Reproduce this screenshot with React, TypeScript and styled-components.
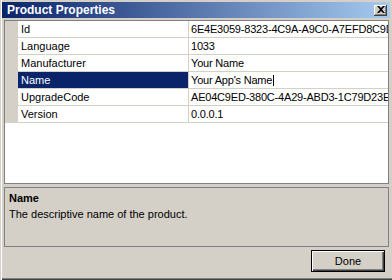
import React from 'react'
import styled, { createGlobalStyle } from 'styled-components'

const GlobalStyle = createGlobalStyle`
  html, body {
    margin: 0;
    padding: 0;
    background: #d4d0c8;
  }
  * {
    box-sizing: border-box;
  }
`

const Window = styled.div`
  width: 392px;
  height: 280px;
  background: #d4d0c8;
  display: flex;
  flex-direction: column;
  padding-top: 2px;
  font-family: 'Liberation Sans', Arial, sans-serif;
  font-size: 11px;
  color: #000;
  box-shadow: inset 1px 0 #d4d0c8, inset 2px 0 #fff, inset 0 -1px #404040, inset 0 -2px #808080;
`

const TitleBar = styled.div`
  height: 16px;
  margin: 0 2px 2px 2px;
  background: linear-gradient(to right, #0a246a, #a6caf0);
  display: flex;
  align-items: center;
  justify-content: space-between;
  padding: 0 3px 0 5px;
`

const Title = styled.span`
  color: #fff;
  font-weight: bold;
  font-size: 12px;
  line-height: 16px;
`

const CloseButton = styled.div`
  width: 13px;
  height: 11px;
  background: #d4d0c8;
  box-shadow: inset -1px -1px #404040, inset 1px 1px #fff, inset -2px -2px #808080;
  display: flex;
  align-items: center;
  justify-content: center;
  padding-bottom: 1px;
`

const Grid = styled.div`
  margin-left: 4px;
  width: 385px;
  height: 164px;
  border: 1px solid #808080;
  background: #fff;
  overflow: hidden;
`

const Row = styled.div`
  display: flex;
  height: 17px;
`

const Gutter = styled.div`
  width: 13px;
  background: #d4d0c8;
  flex: none;
`

const LabelCell = styled.div<{ $selected?: boolean }>`
  width: 171px;
  flex: none;
  padding-left: 3px;
  line-height: 16px;
  border-bottom: 1px solid #d4d0c8;
  border-right: 1px solid #d4d0c8;
  white-space: nowrap;
  background: ${(p) => (p.$selected ? '#0a246a' : '#fff')};
  color: ${(p) => (p.$selected ? '#fff' : '#000')};
`

const ValueCell = styled.div`
  flex: 1;
  padding-left: 2px;
  line-height: 16px;
  letter-spacing: -0.2px;
  border-bottom: 1px solid #d4d0c8;
  white-space: nowrap;
  overflow: hidden;
`

const Caret = styled.span`
  display: inline-block;
  width: 1px;
  height: 11px;
  margin-left: 1px;
  background: #000;
  vertical-align: -2px;
`

const Description = styled.div`
  margin: 3px 0 0 4px;
  width: 385px;
  height: 60px;
  border: 1px solid #808080;
  padding: 4px 4px;
`

const DescTitle = styled.div`
  font-weight: bold;
  line-height: 13px;
`

const DescText = styled.div`
  line-height: 13px;
  margin-top: 3px;
`

const Footer = styled.div`
  display: flex;
  justify-content: flex-end;
  padding: 3px 7px 0 0;
`

const Button = styled.div`
  width: 74px;
  height: 22px;
  border: 1px solid #000;
  background: #d4d0c8;
  box-shadow: inset 1px 1px #fff, inset -1px -1px #404040, inset -2px -2px #808080;
  display: flex;
  align-items: center;
  justify-content: center;
`

const props = [
  { name: 'Id', value: '6E4E3059-8323-4C9A-A9C0-A7EFD8C9D1F2' },
  { name: 'Language', value: '1033' },
  { name: 'Manufacturer', value: 'Your Name' },
  { name: 'Name', value: "Your App's Name", selected: true },
  { name: 'UpgradeCode', value: 'AE04C9ED-380C-4A29-ABD3-1C79D23E1A7B' },
  { name: 'Version', value: '0.0.0.1' },
]

export default function App() {
  return (
    <>
      <GlobalStyle />
      <Window>
        <TitleBar>
          <Title>Product Properties</Title>
          <CloseButton>
            <svg width="8" height="7" viewBox="0 0 8 7">
              <path d="M0 0h2l2 2 2-2h2L5 3.5 8 7H6L4 5 2 7H0l3-3.5z" fill="#000" />
            </svg>
          </CloseButton>
        </TitleBar>
        <Grid>
          {props.map((p) => (
            <Row key={p.name}>
              <Gutter />
              <LabelCell $selected={p.selected}>{p.name}</LabelCell>
              <ValueCell>
                {p.value}
                {p.selected && <Caret />}
              </ValueCell>
            </Row>
          ))}
        </Grid>
        <Description>
          <DescTitle>Name</DescTitle>
          <DescText>The descriptive name of the product.</DescText>
        </Description>
        <Footer>
          <Button>Done</Button>
        </Footer>
      </Window>
    </>
  )
}
